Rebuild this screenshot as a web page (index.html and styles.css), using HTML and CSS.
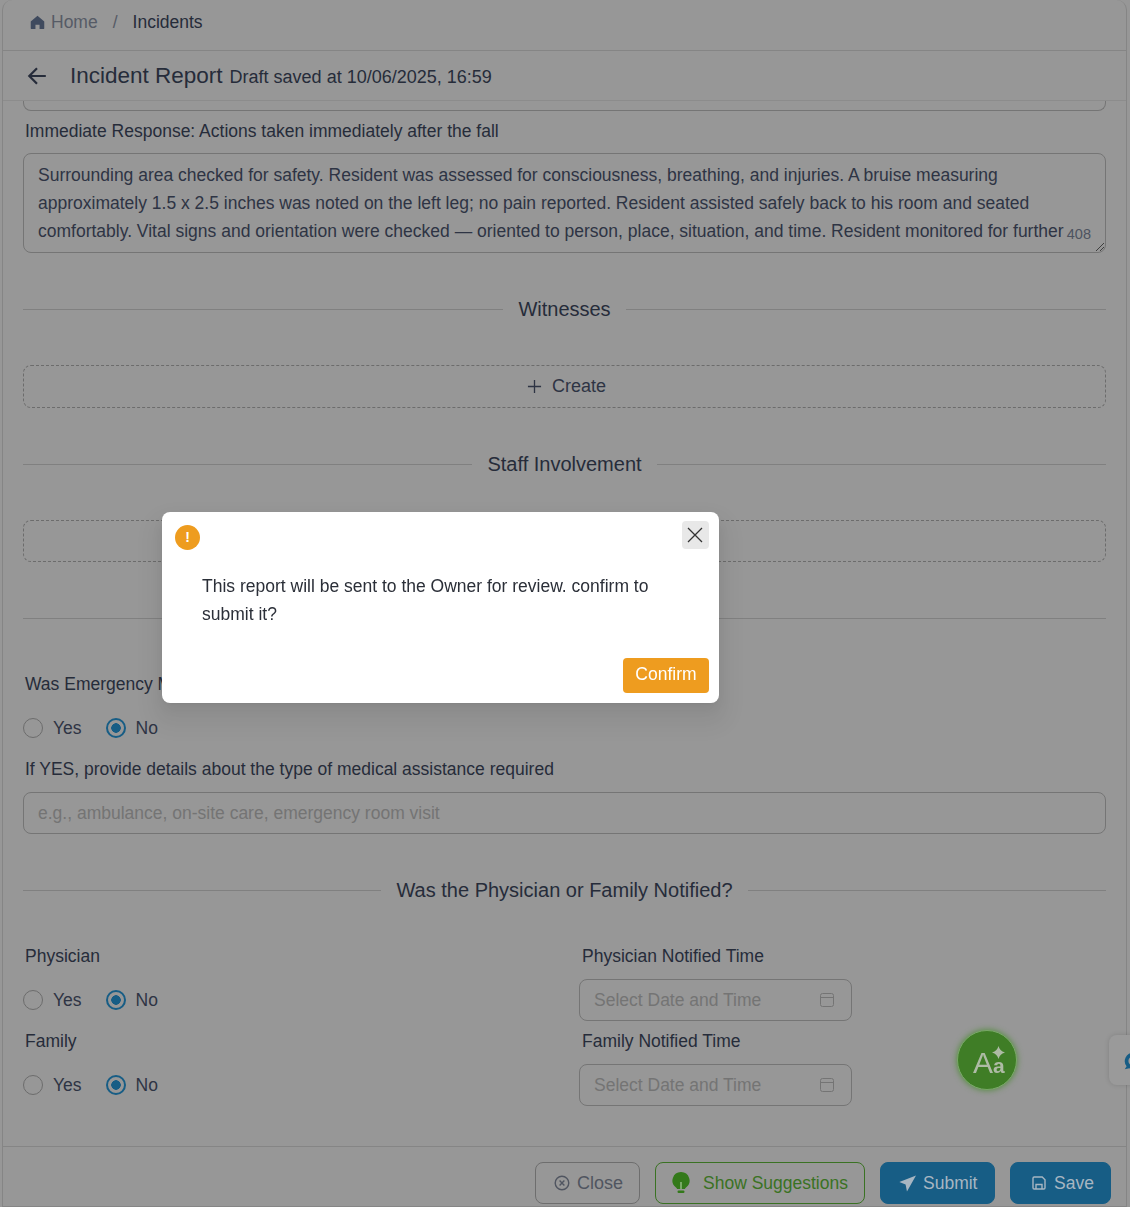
FILE: index.html
```html
<!DOCTYPE html>
<html>
<head>
  <title>Incident Report</title>
  <link rel="stylesheet" href="styles.css">
</head>
<body>
  <div class="app">
    <nav class="crumbs">
      <svg class="home-icon" viewBox="0 0 16 16"><path d="M8 .8.8 6.800V14a1 1 0 0 0 1 1h4v-4.600h4.400V15h4a1 1 0 0 0 1-1V6.800z"/></svg>
      <span class="crumb-home">Home</span>
      <span class="crumb-sep">/</span>
      <span class="crumb-current">Incidents</span>
    </nav>
    <header class="title-bar">
      <svg class="back-icon" viewBox="0 0 20 20"><path d="M18 10H3M10 3l-7 7 7 7"/></svg>
      <h1>Incident Report</h1>
      <span class="draft">Draft saved at 10/06/2025, 16:59</span>
    </header>

    <main class="content">
      <div class="clipped-box"></div>
      <label class="field-label first-label">Immediate Response: Actions taken immediately after the fall</label>
      <div class="textarea">
        Surrounding area checked for safety. Resident was assessed for consciousness, breathing, and injuries. A bruise measuring approximately 1.5 x 2.5 inches was noted on the left leg; no pain reported. Resident assisted safely back to his room and seated comfortably. Vital signs and orientation were checked — oriented to person, place, situation, and time. Resident monitored for further
        <span class="counter">408</span>
        <svg class="resize-grip" viewBox="0 0 10 10"><path d="M1 9 9 1M5 9l4-4"/></svg>
      </div>

      <div class="divider"><span>Witnesses</span></div>
      <button class="dashed-btn">
        <svg class="plus-icon" viewBox="0 0 16 16"><path d="M8 1v14M1 8h14"/></svg>
        Create
      </button>

      <div class="divider"><span>Staff Involvement</span></div>
      <button class="dashed-btn dashed-short">
        <svg class="plus-icon" viewBox="0 0 16 16"><path d="M8 1v14M1 8h14"/></svg>
        Create
      </button>

      <div class="divider"></div>
      <label class="field-label emergency-label">Was Emergency Medical Assistance Required?</label>
      <div class="radios">
        <span class="radio"><i class="dot"></i>Yes</span>
        <span class="radio"><i class="dot checked"></i>No</span>
      </div>
      <label class="field-label detail-label">If YES, provide details about the type of medical assistance required</label>
      <div class="input placeholder">e.g., ambulance, on-site care, emergency room visit</div>

      <div class="divider"><span>Was the Physician or Family Notified?</span></div>
      <div class="notify-grid">
        <div>
          <label class="field-label">Physician</label>
          <div class="radios">
            <span class="radio"><i class="dot"></i>Yes</span>
            <span class="radio"><i class="dot checked"></i>No</span>
          </div>
        </div>
        <div>
          <label class="field-label time-label">Physician Notified Time</label>
          <div class="input date-input placeholder">Select Date and Time
            <svg class="cal-icon" viewBox="0 0 16 16"><rect x="1.500" y="1.500" width="13" height="13" rx="2"/><path d="M1.500 5.500h13"/></svg>
          </div>
        </div>
        <div>
          <label class="field-label">Family</label>
          <div class="radios">
            <span class="radio"><i class="dot"></i>Yes</span>
            <span class="radio"><i class="dot checked"></i>No</span>
          </div>
        </div>
        <div>
          <label class="field-label time-label">Family Notified Time</label>
          <div class="input date-input placeholder">Select Date and Time
            <svg class="cal-icon" viewBox="0 0 16 16"><rect x="1.500" y="1.500" width="13" height="13" rx="2"/><path d="M1.500 5.500h13"/></svg>
          </div>
        </div>
      </div>
    </main>

    <footer class="footer">
      <button class="btn btn-close">
        <svg class="btn-icon" viewBox="0 0 16 16"><circle cx="8" cy="8" r="6.800"/><path d="M5.600 5.600l4.800 4.800M10.400 5.600l-4.800 4.800"/></svg>
        Close
      </button>
      <button class="btn btn-suggest">
        <svg class="bulb-icon" viewBox="0 0 18 22"><path class="bulb-glass" d="M9 0a8.500 8.500 0 0 0-5 15.400c.7.500 1 1.100 1 1.600h8c0-.5.300-1.100 1-1.600A8.500 8.500 0 0 0 9 0z"/><path class="bulb-wire" d="M9 10v7"/><rect class="bulb-glass" x="5.500" y="18.500" width="7" height="2.500" rx="1.200"/></svg>
        Show Suggestions
      </button>
      <button class="btn btn-primary btn-submit">
        <svg class="send-icon" viewBox="0 0 16 16"><path d="M16 .5.300 6.500l5.900 2.400 1.300 6.600z"/></svg>
        Submit
      </button>
      <button class="btn btn-primary btn-save">
        <svg class="btn-icon" viewBox="0 0 16 16"><path d="M2 3.200A1.200 1.200 0 0 1 3.200 2h8l2.800 2.800v8a1.200 1.200 0 0 1-1.200 1.200H3.200A1.200 1.200 0 0 1 2 12.800z"/><path d="M5 14V9.500h6V14"/></svg>
        Save
      </button>
    </footer>
  </div>

  <button class="fab">
    <span class="fab-a">A</span><span class="fab-b">a</span>
    <svg class="fab-star" viewBox="0 0 12 12"><path d="M6 0c.9 3 2.400 4.800 6 6-3.600 1.200-5.100 3-6 6-.9-3-2.400-4.800-6-6 3.600-1.200 5.100-3 6-6z"/></svg>
  </button>
  <div class="side-tab">
    <svg viewBox="0 0 24 24"><path d="M12 3a9 9 0 0 0-7 14.600L3 21l5-1.200A9 9 0 1 0 12 3zm0 4a5 5 0 1 1 0 10 5 5 0 0 1 0-10z"/></svg>
  </div>

  <div class="modal">
    <div class="modal-head">
      <span class="warn-icon">!</span>
      <button class="modal-x">
        <svg viewBox="0 0 16 16"><path d="M1 1l14 14M15 1 1 15"/></svg>
      </button>
    </div>
    <p class="modal-text">This report will be sent to the Owner for review. confirm to submit it?</p>
    <div class="modal-foot">
      <button class="btn-confirm">Confirm</button>
    </div>
  </div>
</body>
</html>
```

FILE: styles.css
```css
* {
  box-sizing: border-box;
}

body {
  margin: 0;
  height: 1207px;
  overflow: hidden;
  background: #979797;
  color: #262c3a;
  font-family: "Liberation Sans", Arial, sans-serif;
  font-size: 17.5px;
}

button {
  font-family: inherit;
}

.app {
  height: 1207px;
  margin: 0 3px 0 2px;
  border-left: 1px solid #858585;
  border-right: 1px solid #858585;
  border-bottom: 1px solid #858585;
  border-radius: 10px 10px 0 0;
  display: flex;
  flex-direction: column;
}

/* top bars */
.crumbs {
  height: 51px;
  padding: 0 0 5px 27px;
  display: flex;
  align-items: center;
  border-bottom: 1px solid #858585;
}

.home-icon {
  width: 15px;
  height: 15px;
  fill: #3f4a5e;
  margin-right: 6px;
}

.crumb-home {
  color: #565b66;
}

.crumb-sep {
  color: #565b66;
  margin: 0 15px;
}

.title-bar {
  height: 50px;
  padding-left: 23px;
  display: flex;
  align-items: center;
  border-bottom: 1px solid #8c8c8c;
}

.back-icon {
  width: 22px;
  height: 22px;
  fill: none;
  stroke: #262c3a;
  stroke-width: 2;
  margin-right: 22px;
}

h1 {
  margin: 0 7px 0 0;
  font-size: 22.5px;
  font-weight: 400;
}

.draft {
  font-size: 18px;
  padding-top: 3px;
}

/* form */
.content {
  flex: 1;
  padding: 0 20px;
  overflow: hidden;
}

.clipped-box {
  height: 10px;
  border: 1px solid #757575;
  border-top: none;
  border-radius: 0 0 8px 8px;
}

.field-label {
  display: block;
  padding-left: 2px;
  line-height: 28px;
  height: 28px;
}

.first-label {
  margin-top: 6px;
}

.textarea {
  position: relative;
  height: 100px;
  margin-top: 8px;
  padding: 7px 14px;
  border: 1px solid #757575;
  border-radius: 8px;
  line-height: 28px;
  color: #2e3444;
  overflow: hidden;
}

.counter {
  position: absolute;
  right: 14px;
  bottom: 9px;
  font-size: 14.5px;
  line-height: 18px;
  color: #4d5360;
  background: #979797;
  padding-left: 3px;
}

.resize-grip {
  position: absolute;
  right: 0;
  bottom: 0;
  width: 10px;
  height: 10px;
  fill: none;
  stroke: #3e3e3e;
}

.divider {
  display: flex;
  align-items: center;
  margin-top: 44px;
  height: 24px;
  font-size: 20px;
  color: #262c3a;
}

.divider::before,
.divider::after {
  content: "";
  flex: 1;
  border-top: 1px solid #808080;
}

.divider span {
  padding: 0 15px;
}

.dashed-btn {
  display: flex;
  align-items: center;
  justify-content: center;
  width: 100%;
  height: 43px;
  margin-top: 44px;
  padding: 0 0 0 4px;
  background: none;
  border: 1px dashed #6c6c6c;
  border-radius: 8px;
  font-size: 18px;
  color: #2e3444;
}

.dashed-short {
  height: 42px;
}

.plus-icon {
  width: 15px;
  height: 15px;
  fill: none;
  stroke: #2e3444;
  stroke-width: 1.4;
  margin-right: 10px;
}

.emergency-label {
  margin-top: 40px;
}

.radios {
  display: flex;
  gap: 24px;
  margin-top: 16px;
  height: 28px;
  align-items: center;
}

.radio {
  display: flex;
  align-items: center;
  color: #2e3444;
}

.dot {
  width: 20px;
  height: 20px;
  margin-right: 10px;
  border: 1px solid #6c6c6c;
  border-radius: 50%;
}

.dot.checked {
  border: 2px solid #175d85;
  background: radial-gradient(circle, #175d85 0 4.500px, transparent 5px);
}

.detail-label {
  margin-top: 13px;
}

.input {
  display: flex;
  align-items: center;
  height: 42px;
  margin-top: 9px;
  padding: 0 14px;
  border: 1px solid #757575;
  border-radius: 8px;
}

.placeholder {
  color: #747474;
}

.notify-grid {
  display: grid;
  grid-template-columns: 556px 1fr;
  row-gap: 6px;
  margin-top: 40px;
}

.time-label {
  padding-left: 3px;
}

.date-input {
  position: relative;
  width: 273px;
}

.cal-icon {
  position: absolute;
  right: 16px;
  top: 12px;
  width: 16px;
  height: 16px;
  fill: none;
  stroke: #747474;
}

/* footer */
.footer {
  height: 60px;
  padding: 15px 15px 0 0;
  display: flex;
  justify-content: flex-end;
  gap: 15px;
  border-top: 1px solid #858585;
}

.btn {
  display: flex;
  align-items: center;
  height: 42px;
  padding: 0 16px;
  border-radius: 8px;
  font-size: 17.5px;
  background: none;
  border: 1px solid #6e6e6e;
  color: #505560;
}

.btn-icon {
  width: 16px;
  height: 16px;
  fill: none;
  stroke: currentColor;
  stroke-width: 1.4;
  margin-right: 7px;
}

.btn-close {
  width: 105px;
  padding-left: 18px;
  font-size: 18px;
}

.btn-suggest {
  width: 210px;
  border-color: #3a7223;
  color: #3a7223;
}

.bulb-icon {
  width: 18px;
  height: 22px;
  margin-right: 13px;
}

.bulb-glass {
  fill: #33791a;
}

.bulb-wire {
  fill: none;
  stroke: #9fc490;
  stroke-width: 1.3;
}

.btn-primary {
  background: #175d85;
  border-color: #175d85;
  color: #a7b6c2;
}

.btn-submit {
  width: 115px;
  padding-left: 18px;
}

.btn-save {
  width: 101px;
  padding-left: 20px;
}

.send-icon {
  width: 17px;
  height: 17px;
  fill: #a7b6c2;
  margin-right: 7px;
}

/* floating bits */
.fab {
  position: fixed;
  left: 957px;
  top: 1030px;
  width: 60px;
  height: 60px;
  padding: 0;
  border: 1px solid #79a868;
  border-radius: 50%;
  background: #3f7d26;
  box-shadow: 0 0 6px #4d8a35;
  color: #aebba5;
}

.fab-a {
  position: absolute;
  left: 15px;
  top: 15px;
  font-size: 30px;
  line-height: 34px;
}

.fab-b {
  position: absolute;
  left: 35px;
  top: 22px;
  font-size: 21px;
  line-height: 26px;
  font-weight: 700;
}

.fab-star {
  position: absolute;
  left: 34px;
  top: 15px;
  width: 13px;
  height: 13px;
  fill: #aebba5;
}

.side-tab {
  position: fixed;
  left: 1109px;
  top: 1035px;
  width: 40px;
  height: 50px;
  border-radius: 8px;
  background: #9a9a9a;
  box-shadow: 0 0 5px rgba(0, 0, 0, 0.15);
  overflow: hidden;
}

.side-tab svg {
  position: absolute;
  left: 13px;
  top: 15px;
  width: 22px;
  height: 22px;
  fill: #175d85;
}

/* modal */
.modal {
  position: fixed;
  left: 162px;
  top: 512px;
  width: 557px;
  height: 191px;
  padding: 9px 10px;
  border-radius: 8px;
  background: #fff;
  box-shadow: 0 6px 16px rgba(0, 0, 0, 0.06), 0 3px 6px -4px rgba(0, 0, 0, 0.1), 0 14px 20px 10px rgba(0, 0, 0, 0.05);
  color: #2b2f38;
}

.modal-head {
  display: flex;
  justify-content: space-between;
  align-items: flex-start;
}

.warn-icon {
  width: 25px;
  height: 25px;
  margin: 4px 0 0 3px;
  border-radius: 50%;
  background: #ee9c1f;
  color: #fff;
  font-size: 14px;
  font-weight: 700;
  line-height: 25px;
  text-align: center;
}

.modal-x {
  display: flex;
  align-items: center;
  justify-content: center;
  width: 27px;
  height: 28px;
  padding: 0 1px 0 0;
  border: none;
  border-radius: 4px;
  background: #e8e8e8;
}

.modal-x svg {
  width: 16px;
  height: 16px;
  fill: none;
  stroke: #333;
  stroke-width: 1.3;
}

.modal-text {
  margin: 22px 20px 0 30px;
  line-height: 28px;
}

.modal-foot {
  display: flex;
  justify-content: flex-end;
  margin-top: 30px;
}

.btn-confirm {
  width: 86px;
  height: 35px;
  padding: 0 0 2px;
  border: none;
  border-radius: 4px;
  background: #ee9c1f;
  color: #fff;
  font-size: 17.5px;
}
```
